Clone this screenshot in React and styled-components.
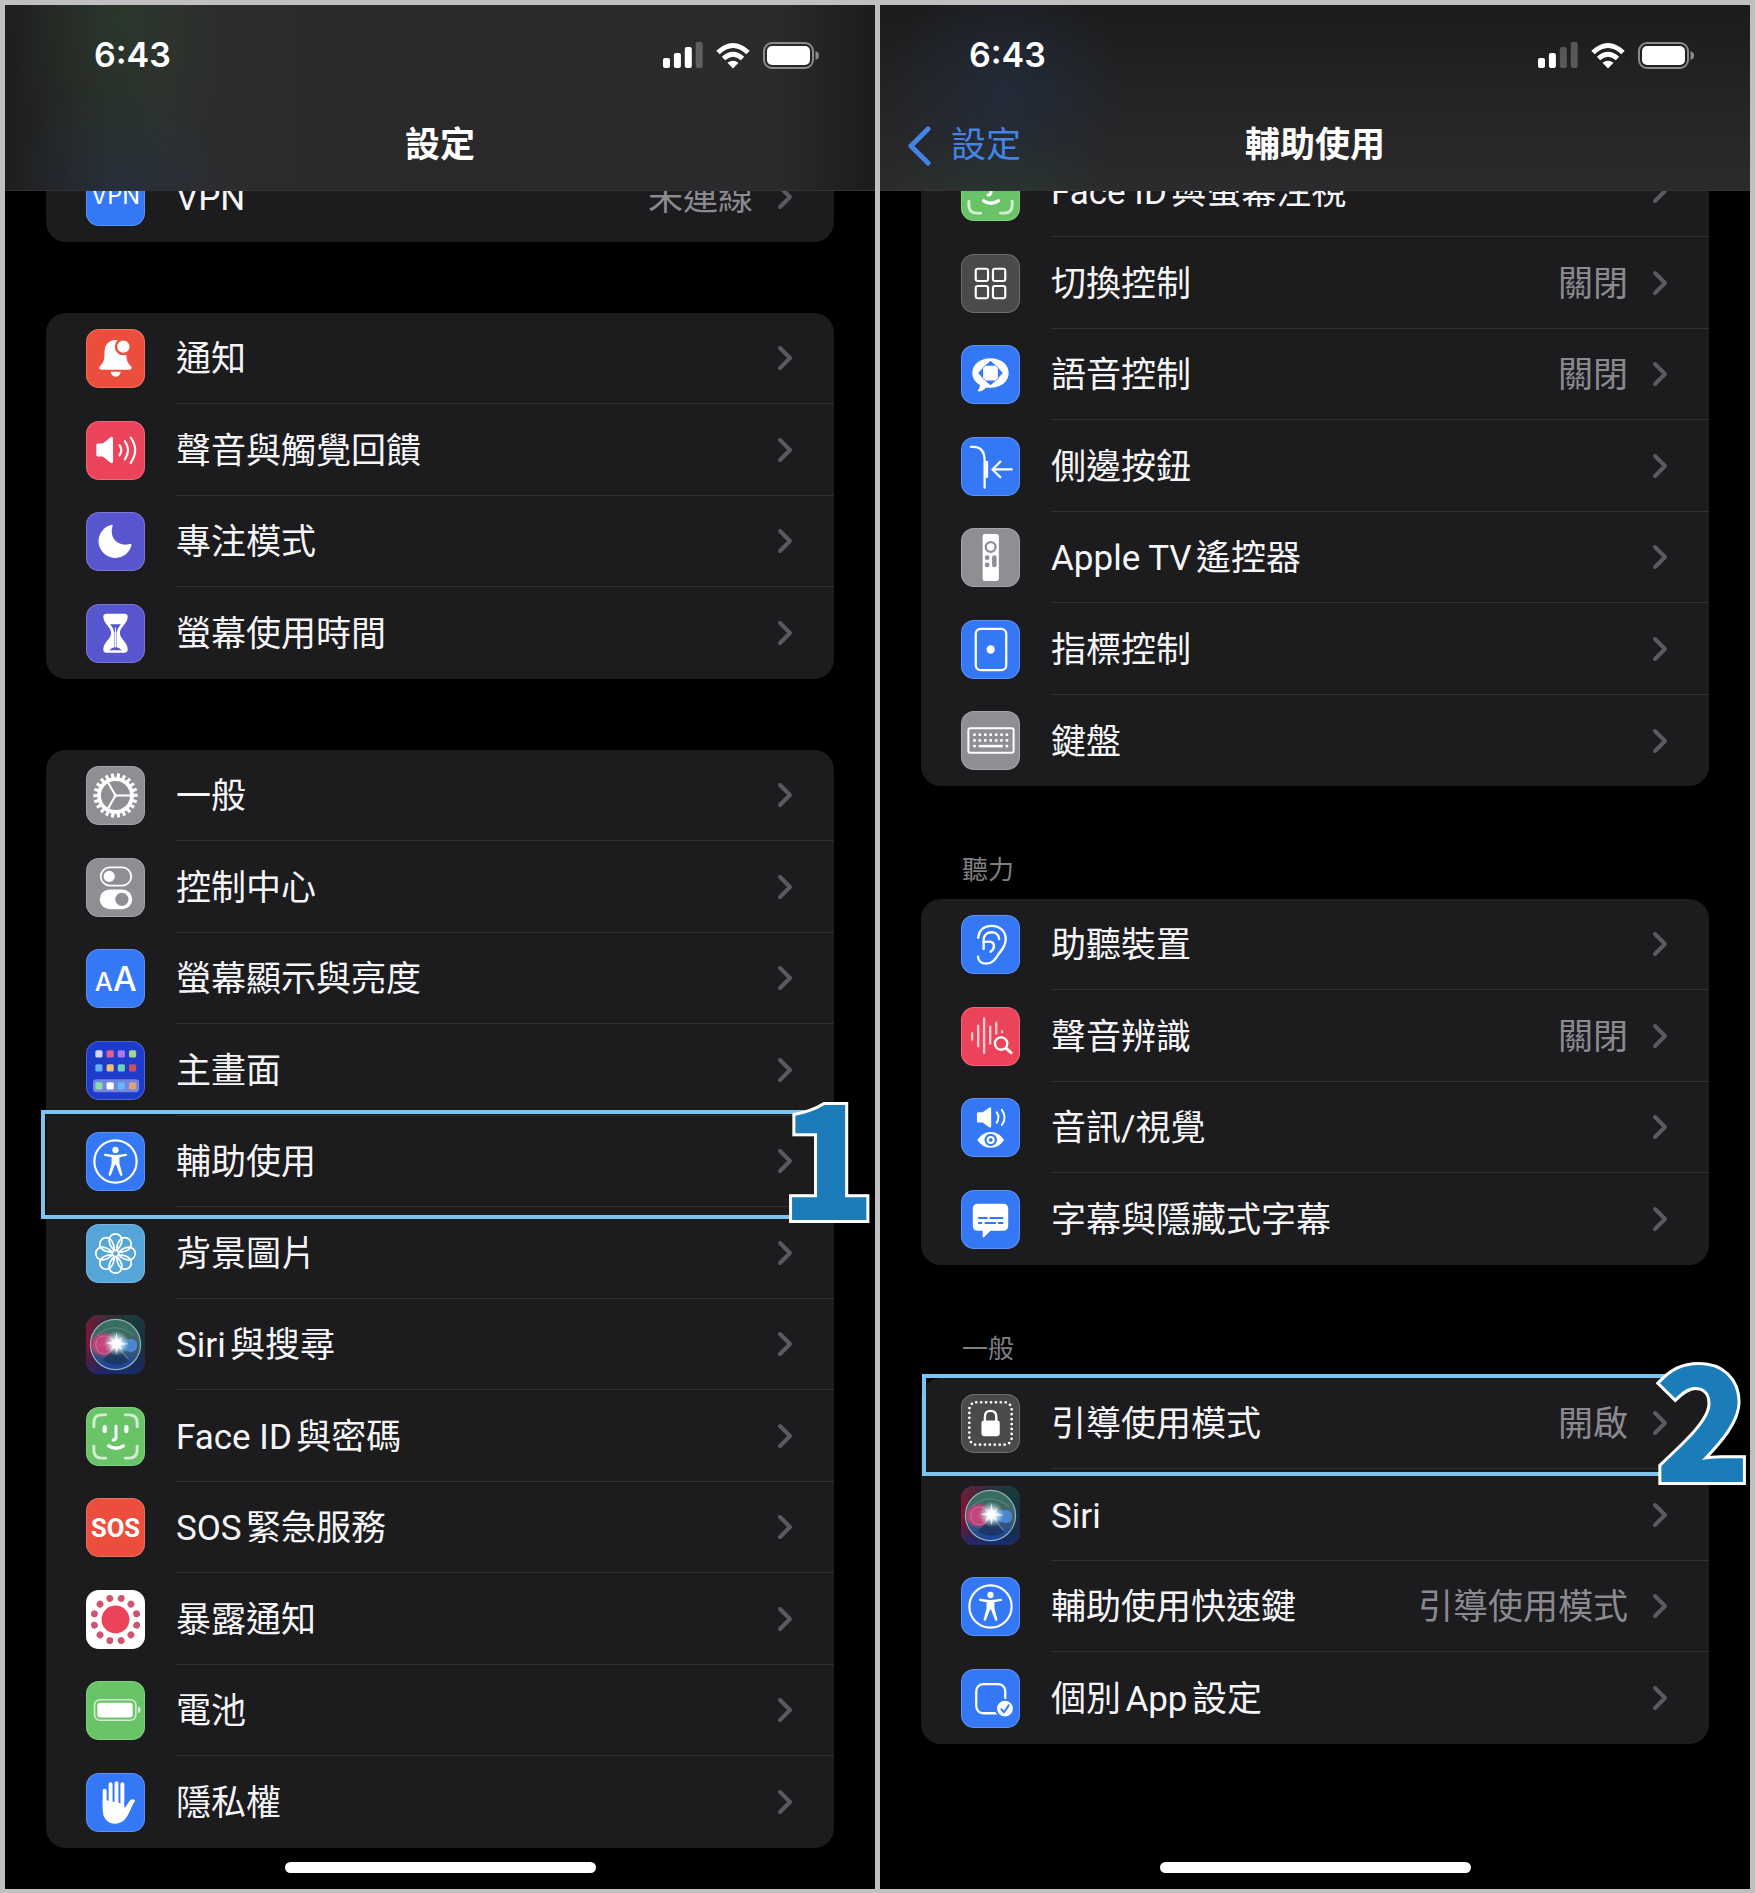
import React from 'react';
import styled, { createGlobalStyle } from 'styled-components';

const GlobalStyle = createGlobalStyle`
  * {
    box-sizing: border-box;
  }
  body {
    margin: 0;
    background-color: #c0c0c0;
    color: #f5f5f7;
    font-family: Roboto, "Noto Sans CJK TC", sans-serif;
    font-size: 35px;
    line-height: 44px;
    text-autospace: normal;
  }
  a {
    color: inherit;
    text-decoration: none;
  }
`

const Page = styled.main`
  min-height: 100vh;
  padding: 5px;
  display: grid;
  grid-template-columns: 1fr 1fr;
  gap: 5px;
`

const Phone = styled.section`
  background-color: #000;
  display: flex;
  flex-direction: column;
  overflow: hidden;
`

const Header = styled.header`
  position: relative;
  z-index: 1;
  padding-top: 28px;
  border-bottom: 1px solid #333335;
  background: ${props => props.$glow};
`

const StatusBar = styled.div`
  display: flex;
  justify-content: space-between;
  align-items: center;
  padding: 0 55px 0 89px;
`

const Time = styled.time`
  color: white;
  font-family: Inter, sans-serif;
  font-size: 34px;
  font-weight: 600;
`

const StatusIcons = styled.svg`
  width: 157px;
  height: 28px;
`

const NavBar = styled.nav`
  display: grid;
  grid-template-columns: 1fr auto 1fr;
  align-items: center;
  padding: 0 27px;
  height: 113px;
  padding-top: 24px;
`

const BackLink = styled.a`
  display: flex;
  align-items: center;
  gap: 20px;
  color: #4583e6;
`

const Title = styled.h1`
  grid-column: 2;
  margin: 0;
  color: white;
  font-size: 35px;
  font-weight: 700;
`

const List = styled.div`
  display: flex;
  flex-direction: column;
  gap: ${props => props.$gap}px;
  margin-top: -${props => props.$scrolled}px;
  padding: 0 41px 14px;
`

const SectionTitle = styled.h2`
  margin: 0;
  padding: 0 41px 11px;
  color: #7f7f84;
  font-size: 26px;
  line-height: 36px;
  font-weight: 400;
`

const Card = styled.ul`
  list-style: none;
  margin: 0;
  padding: 0;
  border-radius: 20px;
  background-color: #1c1c1e;
`

const Item = styled.li`
  position: relative;
  height: 91px;
  &:nth-child(even) {
    height: 92px;
  }
`

const RowLink = styled.a`
  display: flex;
  align-items: center;
  gap: 31px;
  height: 100%;
  padding-left: 40px;
`

const IconTile = styled.svg`
  flex: none;
  width: 59px;
  height: 59px;
  border-radius: 13px;
  background-color: ${props => props.$color};
  box-shadow: inset 0 0 0 1px rgba(255, 255, 255, 0.2);
`

const RowBody = styled.span`
  flex: 1;
  align-self: stretch;
  display: flex;
  align-items: center;
  gap: 24px;
  padding-right: 41px;
  border-bottom: 1px solid #313134;
  ${Item}:last-child & {
    border-bottom: none;
  }
`

const Label = styled.span`
  flex: 1;
  padding-top: 4px;
`

const Value = styled.span`
  padding-top: 4px;
  color: #8a8a90;
`

const Chevron = styled.svg`
  flex: none;
  width: 16px;
  height: 26px;
`

const Highlight = styled.span`
  position: absolute;
  top: ${props => props.$top}px;
  bottom: ${props => props.$bottom}px;
  left: ${props => props.$left}px;
  right: 15px;
  border: 4px solid #7cc5f3;
  border-right: none;
  pointer-events: none;
`

const StepNumber = styled.strong`
  position: absolute;
  z-index: 2;
  right: -42px;
  bottom: -24px;
  color: #1c7cb9;
  font-family: "Noto Sans CJK TC", sans-serif;
  font-size: 158px;
  line-height: 158px;
  font-weight: 900;
  -webkit-text-stroke: 6px white;
  paint-order: stroke fill;
  pointer-events: none;
`

const HomeBar = styled.div`
  width: 311px;
  height: 11px;
  margin: auto auto 16px;
  border-radius: 6px;
  background-color: white;
`

const BLUE = '#3478f6';
const RED = '#eb4e3d';
const PINK = '#eb445a';
const INDIGO = '#5856ce';
const GRAY = '#8e8e93';
const DARK = '#4a4a4c';
const GREEN = '#68c466';

const rowStroke = { fill: 'none', stroke: 'white', strokeLinecap: 'round', strokeLinejoin: 'round' };

const times = (n) => Array.from({ length: n }, (_, i) => i);

const FaceGlyph = () => (
  <g {...rowStroke}>
    <path opacity=".7" strokeWidth="3" d="M8 20v-4q0-8 8-8h4M40 8h4q8 0 8 8v4M52 40v4q0 8-8 8h-4M20 52h-4q-8 0-8-8v-4" />
    <path strokeWidth="4.4" d="M19 20.500v4M41 20.500v4" />
    <path strokeWidth="3" d="M30.500 19.500v11q0 3-3 3" />
    <path strokeWidth="3.400" d="M23 39.500q7.500 5 15 0" />
  </g>
);

const AccessGlyph = () => (
  <g>
    <circle cx="30" cy="30" r="21.500" fill="none" stroke="white" strokeWidth="2.200" />
    <circle cx="30" cy="18.300" r="3.200" fill="white" />
    <path fill="white" d="M19.500 22.200q10.500 2.200 21 0q1.400 0 1.200 1.300q0 .8-1.200 1l-6.500 1.200v6.300l3 11q.2 1.400-.9 1.600t-1.600-1l-4-10.600h-1l-4 10.600q-.5 1.200-1.600 1t-.9-1.600l3-11v-6.300l-6.500-1.200q-1.200-.2-1.200-1q-.2-1.300 1.200-1.300z" />
  </g>
);

const SiriGlyph = () => (
  <g>
    <defs>
      <linearGradient id="siriBack" x1="0" y1=".4" x2="1" y2=".6">
        <stop offset="0" stopColor="#8a1238" />
        <stop offset=".35" stopColor="#40203a" />
        <stop offset=".7" stopColor="#16383a" />
        <stop offset="1" stopColor="#173144" />
      </linearGradient>
      <linearGradient id="siriTop" x1="0" y1="0" x2="0" y2="1">
        <stop offset="0" stopColor="#1f4540" stopOpacity=".4" />
        <stop offset=".5" stopColor="#222" stopOpacity="0" />
        <stop offset="1" stopColor="#152a84" stopOpacity=".8" />
      </linearGradient>
      <linearGradient id="siriOrb" x1="0" y1="0" x2="0" y2="1">
        <stop offset="0" stopColor="#35705c" />
        <stop offset=".5" stopColor="#45626c" />
        <stop offset="1" stopColor="#173fa0" />
      </linearGradient>
      <radialGradient id="siriPink">
        <stop offset="0" stopColor="#c94a86" />
        <stop offset=".75" stopColor="#d13c74" stopOpacity=".85" />
        <stop offset="1" stopColor="#d13c74" stopOpacity="0" />
      </radialGradient>
      <radialGradient id="siriFlare">
        <stop offset="0" stopColor="#fff" />
        <stop offset=".35" stopColor="#f2fbff" stopOpacity=".9" />
        <stop offset="1" stopColor="#9cdff0" stopOpacity="0" />
      </radialGradient>
    </defs>
    <rect width="60" height="60" fill="url(#siriBack)" />
    <rect width="60" height="60" fill="url(#siriTop)" />
    <circle cx="30" cy="30" r="25.500" fill="url(#siriOrb)" stroke="#8fb5b8" strokeWidth="1.200" />
    <ellipse cx="18" cy="30" rx="14" ry="13" fill="url(#siriPink)" />
    <path fill="#4f8fe8" opacity=".8" d="M31 29c10-6 21-7 21 2s-12 9-21-2z" />
    <path fill="#10233c" opacity=".5" d="M30 33l14 14q-14 7-27-1z" />
    <path fill="none" stroke="#c79cc8" strokeWidth="1" opacity=".6" d="M31 30C26 18 10 19 10 30s13 14 21 0l12 15" />
    <path fill="none" stroke="#5cb08c" strokeWidth="1" opacity=".6" d="M11 21q17-16 38 0" />
    <circle cx="31" cy="29" r="13" fill="url(#siriFlare)" />
    <path fill="white" opacity=".75" d="M31 17l1.500 9 5-4-3 5.500 9 2-9 1.500 3 5-5-3-1.500 7-1.500-7-5 3 3-5.500-8-2 8-1.500-3-4 5 3z" />
  </g>
);

const homeDots = [
  ['#d0d6f6', '#dc6190', '#a67bf4', '#a6cf90'],
  ['#60b0f8', '#f0bf76', '#6dd0ba', '#c9506a'],
  ['#87dfa5', '#ffffff', '#64b8f8', '#dca27e'],
];

const ICONS = {
  vpn: {
    color: BLUE,
    glyph: <text x="30" y="38" textAnchor="middle" fill="white" fontFamily="Inter, sans-serif" fontSize="24" fontWeight="400">VPN</text>,
  },
  bell: {
    color: RED,
    glyph: (
      <g fill="white">
        <path d="M30 11.300c7 0 11 5 11 12.500 0 9 1.500 10.500 4.800 14.200 1.200 1.500.7 3.500-1.800 3.500H15.800c-2.500 0-3-2-1.800-3.500 3.300-3.700 4.800-5.200 4.800-14.200 0-7.500 4.200-12.500 11.200-12.500z" />
        <path d="M25 43.500h10.400q-1.200 5-5.200 5t-5.200-5z" />
        <circle cx="38" cy="18" r="7.500" stroke={RED} strokeWidth="2.500" />
      </g>
    ),
  },
  speaker: {
    color: PINK,
    glyph: (
      <g>
        <path fill="white" d="M12 23h5l8-6.500q2.500-1.500 2.500 1.500v23q0 3-2.500 1.500L17 36h-5q-1.500 0-1.500-1.500v-10q0-1.500 1.500-1.500z" />
        <path {...rowStroke} strokeWidth="2.200" d="M34 24.500q4 5 0 10.500M39.500 20.500q6.500 9 0 18.500M45.500 17q9 12.500 0 25.500" />
      </g>
    ),
  },
  moon: {
    color: INDIGO,
    glyph: <path fill="white" d="M25.500 13.200c1.200-.5 1.900 0 1.500 1.200-3.700 11.500 5 21.500 17.500 18.200 1.400-.3 2.200.5 1.600 1.700A17 17 0 1 1 25.500 13.200z" />,
  },
  hourglass: {
    color: INDIGO,
    glyph: (
      <g>
        <path fill="white" d="M21 10h18q4 0 3.300 4c-1 7-7.800 9.500-7.800 15.500s6.800 8.500 7.800 15.500q.7 4.500-3.300 4.500H21q-4 0-3.300-4.500c1-7 7.800-9.500 7.800-15.500S18.700 21 17.700 14q-.7-4 3.300-4z" />
        <path fill={INDIGO} d="M24.500 20.500h11q-3.700 4-4.500 8.500v15q3 .5 5.500 3h-13q2.500-2.500 5.500-3v-15q-.8-4.500-4.500-8.500z" />
        <path stroke="white" strokeWidth="1" d="M30 24v20" />
      </g>
    ),
  },
  gear: {
    color: GRAY,
    glyph: (
      <g {...rowStroke}>
        <circle cx="30" cy="30" r="16.700" strokeWidth="3.800" />
        {times(22).map(i => (
          <path key={i} strokeWidth="3.200" strokeLinecap="butt" d="M30 13V7.500" transform={`rotate(${i * 360 / 22 + 8} 30 30)`} />
        ))}
        <path strokeWidth="2.200" d="M30 30h16M30 30l-8-14M30 30l-8 14" />
        <circle cx="30" cy="30" r="1.500" fill="white" />
      </g>
    ),
  },
  toggles: {
    color: GRAY,
    glyph: (
      <g>
        <rect x="15" y="9.500" width="31" height="18.500" rx="9.250" fill="none" stroke="white" strokeWidth="1.800" />
        <circle cx="23.600" cy="18.700" r="5.700" fill="white" />
        <rect x="14" y="32" width="33" height="20" rx="10" fill="white" />
        <circle cx="36.500" cy="42" r="6.700" fill={GRAY} />
      </g>
    ),
  },
  letters: {
    color: BLUE,
    glyph: (
      <g fill="white" fontFamily="Inter, sans-serif" fontWeight="500">
        <text x="9" y="42.500" fontSize="26">A</text>
        <text x="27.500" y="42.500" fontSize="34">A</text>
      </g>
    ),
  },
  home: {
    color: '#1d3ccb',
    glyph: (
      <g>
        <rect x="7" y="39" width="47" height="13" rx="3.500" fill="white" opacity=".38" />
        {homeDots.map((line, r) => line.map((fill, c) => (
          <rect key={`${r}-${c}`} x={9.5 + c * 11.4} y={[9.5, 23.700, 42][r]} width="7.300" height="7.300" rx="1.600" fill={fill} />
        )))}
      </g>
    ),
  },
  access: { color: BLUE, glyph: <AccessGlyph /> },
  flower: {
    color: '#55a5d8',
    glyph: (
      <g {...rowStroke} strokeWidth="1.800">
        {times(8).map(i => (
          <path key={i} d="M30 28C26.500 25 23.500 20.500 23.500 16.500a6.500 6.500 0 0 1 13 0C36.500 20.500 33.500 25 30 28z" transform={`rotate(${i * 45} 30 30)`} />
        ))}
        <circle cx="30" cy="30" r="3.300" fill="#55a5d8" />
      </g>
    ),
  },
  siri: { color: '#1b2a38', glyph: <SiriGlyph /> },
  face: { color: GREEN, glyph: <FaceGlyph /> },
  sos: {
    color: RED,
    glyph: <text x="30" y="40" textAnchor="middle" fill="white" fontFamily="Roboto, sans-serif" fontSize="26" fontWeight="700">SOS</text>,
  },
  exposure: {
    color: 'white',
    glyph: (
      <g fill="#eb445a">
        <circle cx="30" cy="30" r="14.200" />
        {times(12).map(i => (
          <circle key={i} cx="30" cy="7.800" r="3.500" fill="#cf5470" transform={`rotate(${15 + i * 30} 30 30)`} />
        ))}
      </g>
    ),
  },
  battery: {
    color: GREEN,
    glyph: (
      <g>
        <rect x="8.700" y="19" width="42" height="21" rx="5.500" fill="none" stroke="white" strokeWidth="1.600" opacity=".7" />
        <rect x="11.500" y="22" width="36" height="15" rx="2.800" fill="white" />
        <path fill="white" opacity=".7" d="M52.700 26q3 1 3 3.500t-3 3.500z" />
      </g>
    ),
  },
  hand: {
    color: BLUE,
    glyph: (
      <g>
        <path {...rowStroke} strokeWidth="4" d="M19 18v16M25 11.500V30M31 10.500V30M37 11.500V30" />
        <path fill="white" d="M17 27l22 4.500v4c1.500-1 3-3.500 4.500-6 1.800-2.800 4.500-3.300 6-2q.6.800-.3 2C46 34 44.500 41 40.500 46c-3 3.800-6.500 5.500-10.500 5.500-8.500 0-13-6-13-14z" />
      </g>
    ),
  },
  switches: {
    color: DARK,
    glyph: (
      <g {...rowStroke} strokeWidth="2.200">
        <rect x="15" y="15" width="12.500" height="12.500" rx="2" />
        <rect x="32.500" y="15" width="12.500" height="12.500" rx="2" />
        <rect x="15" y="32.500" width="12.500" height="12.500" rx="2" />
        <rect x="32.500" y="32.500" width="12.500" height="12.500" rx="2" />
      </g>
    ),
  },
  voice: {
    color: BLUE,
    glyph: (
      <g>
        <path fill="white" d="M30 13.500c11 0 18.500 6.500 18.500 15S41 43.500 30 43.500c-1.500 0-3-.1-4.300-.4-2 2.300-4.700 3.900-7.700 4.100-.9 0-1.200-.8-.6-1.500 1.300-1.600 1.900-3.300 1.900-5C14.500 37.900 11.500 33.700 11.500 28.500c0-8.500 7.500-15 18.500-15z" />
        <path fill={BLUE} d="M30 16l5.500 5h-11zM30 41l5.500-5h-11zM17.500 28.500l5-5.500v11zM42.500 28.500l-5-5.500v11z" />
        <path fill="none" stroke={BLUE} strokeWidth="1" d="M22.500 23l2-2M35.500 21l2 2M37.500 34l-2 2M24.500 36l-2-2" />
      </g>
    ),
  },
  side: {
    color: BLUE,
    glyph: (
      <g {...rowStroke} strokeWidth="2.300">
        <path d="M10 10h2.500Q24 10 24 24v27.500" />
        <path strokeWidth="2.800" strokeLinecap="butt" d="M26.200 24.500v17" />
        <path d="M51.500 33H32M40 25l-8 8 8 8" />
      </g>
    ),
  },
  remote: {
    color: GRAY,
    glyph: (
      <g fill={GRAY}>
        <rect x="22" y="6" width="16.500" height="48" rx="2.500" fill="white" />
        <circle cx="30.200" cy="19.300" r="5" fill="none" stroke={GRAY} strokeWidth="2.400" />
        <circle cx="26.600" cy="30.200" r="2.400" />
        <circle cx="26.600" cy="37.500" r="2.400" />
        <rect x="31.600" y="27.800" width="4.600" height="12" rx="2.300" />
      </g>
    ),
  },
  pointer: {
    color: BLUE,
    glyph: (
      <g>
        <rect x="15" y="9" width="31" height="42" rx="5" fill="none" stroke="white" strokeWidth="2.300" />
        <circle cx="30.200" cy="30" r="4.200" fill="white" />
      </g>
    ),
  },
  keyboard: {
    color: GRAY,
    glyph: (
      <g fill="white">
        <rect x="7.500" y="17.500" width="46" height="25" rx="1.800" fill="none" stroke="white" strokeWidth="2" />
        {times(7).map(i => <rect key={i} x={12.4 + i * 5.500} y="22.800" width="2.600" height="2.600" />)}
        {times(7).map(i => <rect key={i} x={12.4 + i * 5.500} y="28.600" width="2.600" height="2.600" />)}
        <rect x="12.400" y="34.400" width="2.600" height="2.600" />
        <rect x="17.900" y="34.400" width="24.600" height="2.600" />
        <rect x="45.400" y="34.400" width="2.600" height="2.600" />
      </g>
    ),
  },
  ear: {
    color: BLUE,
    glyph: (
      <g {...rowStroke} strokeWidth="2.400">
        <path d="M17.500 23C18.500 15 24 11 31 11c8.500 0 14.500 5.500 14.500 13.500 0 6-2.500 9.500-6 13.500C36 42 34 49.500 25.500 49.500c-4.500 0-8-2.500-8.200-7" />
        <path d="M23 34.500V26c0-6 4-8.500 8-8.500 4.500 0 7.500 3 7.800 7" />
        <path d="M23 27.500c6-1 10.500-.5 10.500 4 0 2-1.500 4.500-3.500 5.800" />
      </g>
    ),
  },
  sound: {
    color: PINK,
    glyph: (
      <g {...rowStroke}>
        <path opacity=".7" strokeWidth="2.400" d="M11.300 26.500v6.500M17.500 19v21M23.500 11.500v35M29.700 20v17M35.800 16v11M41.800 24.500v1" />
        <circle cx="40.800" cy="37.200" r="6.300" strokeWidth="2.400" />
        <path strokeWidth="3" d="M46 42l5 4.500" />
      </g>
    ),
  },
  audioVisual: {
    color: BLUE,
    glyph: (
      <g>
        <path fill="white" d="M17.500 14.500H22l6.500-4.700q2.200-1.200 2.200 1.200v17.500q0 2.400-2.200 1.200L22 25h-4.500q-1.300 0-1.300-1.300v-7.900q0-1.300 1.300-1.300z" />
        <path {...rowStroke} strokeWidth="2" d="M36.300 14.500q3.600 5.200 0 10.500M41.500 12q5.600 7.700 0 15.500" />
        <path fill="white" d="M16.500 42.700q5.500-8 13.700-8t13.700 8q-5.500 8-13.700 8t-13.700-8z" />
        <circle cx="30.200" cy="42.700" r="5.200" fill="white" stroke={BLUE} strokeWidth="2.200" />
        <circle cx="30.200" cy="42.700" r="1.900" fill={BLUE} />
      </g>
    ),
  },
  subtitles: {
    color: BLUE,
    glyph: (
      <g>
        <path fill="white" d="M17.500 14h25q5.500 0 5.500 5.500v16.500q0 5.500-5.500 5.500H30l-6.500 6.300q-1.500 1.200-1.500-.8v-5.500h-4.500q-5.500 0-5.500-5.500V19.500q0-5.500 5.500-5.500z" />
        <path stroke={BLUE} strokeWidth="2" d="M17.500 28.500h9.500M29 28.500h14M17.500 33.500h4M24 33.500h11.500M37.500 33.500H43" />
      </g>
    ),
  },
  guided: {
    color: DARK,
    glyph: (
      <g>
        <rect x="8.500" y="8.500" width="43" height="43" rx="7" fill="none" stroke="white" strokeWidth="2.800" strokeLinecap="round" strokeDasharray="0 5" />
        <rect x="20.800" y="27" width="18.600" height="16" rx="2.500" fill="white" />
        <path fill="none" stroke="white" strokeWidth="2.400" d="M24.300 28v-4.500q0-6.300 5.800-6.300t5.800 6.300V28" />
      </g>
    ),
  },
  perApp: {
    color: BLUE,
    glyph: (
      <g {...rowStroke}>
        <rect x="15.500" y="15.500" width="29.500" height="29.500" rx="7" strokeWidth="2.300" />
        <circle cx="44.700" cy="40.300" r="9" fill="white" stroke={BLUE} strokeWidth="2" />
        <path stroke={BLUE} strokeWidth="2" d="M41 41l2.800 3 4.700-7" />
      </g>
    ),
  },
};

const settingsCards = [
  { rows: [{ icon: 'vpn', label: 'VPN', value: '未連線' }] },
  {
    rows: [
      { icon: 'bell', label: '通知' },
      { icon: 'speaker', label: '聲音與觸覺回饋' },
      { icon: 'moon', label: '專注模式' },
      { icon: 'hourglass', label: '螢幕使用時間' },
    ],
  },
  {
    rows: [
      { icon: 'gear', label: '一般' },
      { icon: 'toggles', label: '控制中心' },
      { icon: 'letters', label: '螢幕顯示與亮度' },
      { icon: 'home', label: '主畫面' },
      { icon: 'access', label: '輔助使用', step: { number: 1, top: -6, bottom: -12, left: -5 } },
      { icon: 'flower', label: '背景圖片' },
      { icon: 'siri', label: 'Siri與搜尋' },
      { icon: 'face', label: 'Face ID與密碼' },
      { icon: 'sos', label: 'SOS緊急服務' },
      { icon: 'exposure', label: '暴露通知' },
      { icon: 'battery', label: '電池' },
      { icon: 'hand', label: '隱私權' },
    ],
  },
];

const accessCards = [
  {
    rows: [
      { icon: 'face', label: 'Face ID與螢幕注視' },
      { icon: 'switches', label: '切換控制', value: '關閉' },
      { icon: 'voice', label: '語音控制', value: '關閉' },
      { icon: 'side', label: '側邊按鈕' },
      { icon: 'remote', label: 'Apple TV遙控器' },
      { icon: 'pointer', label: '指標控制' },
      { icon: 'keyboard', label: '鍵盤' },
    ],
  },
  {
    title: '聽力',
    rows: [
      { icon: 'ear', label: '助聽裝置' },
      { icon: 'sound', label: '聲音辨識', value: '關閉' },
      { icon: 'audioVisual', label: '音訊/視覺' },
      { icon: 'subtitles', label: '字幕與隱藏式字幕' },
    ],
  },
  {
    title: '一般',
    rows: [
      { icon: 'guided', label: '引導使用模式', value: '開啟', step: { number: 2, top: -4, bottom: -7, left: 1 } },
      { icon: 'siri', label: 'Siri' },
      { icon: 'access', label: '輔助使用快速鍵', value: '引導使用模式' },
      { icon: 'perApp', label: '個別App設定' },
    ],
  },
];

const settingsGlow = `
  radial-gradient(ellipse 110px 180px at 115px 15px, rgba(42, 64, 44, 0.6), transparent),
  radial-gradient(ellipse 110px 100px at 115px 175px, rgba(36, 50, 70, 0.6), transparent),
  linear-gradient(90deg, #1e1e1e, #2d2d2d 18%, #29292b 50%, #2b2b2d 88%, #1c1c1c)`;

const accessGlow = `
  radial-gradient(ellipse 120px 130px at 125px 85px, rgba(34, 48, 70, 0.6), transparent),
  radial-gradient(ellipse 110px 60px at 120px 185px, rgba(40, 60, 42, 0.6), transparent),
  linear-gradient(180deg, #1b1b1b, #232324 45%, #2b2b2d)`;

const Row = ({ icon, label, value, step }) => (
  <Item>
    <RowLink href="#">
      <IconTile viewBox="0 0 60 60" aria-hidden="true" $color={ICONS[icon].color}>
        {ICONS[icon].glyph}
      </IconTile>
      <RowBody>
        <Label>{label}</Label>
        {value && <Value>{value}</Value>}
        <Chevron viewBox="0 0 16 26" aria-hidden="true">
          <path d="M3 3l10 10L3 23" fill="none" stroke="#5b5b5f" strokeWidth="4" strokeLinecap="round" strokeLinejoin="round" />
        </Chevron>
      </RowBody>
    </RowLink>
    {step && (
      <>
        <Highlight $top={step.top} $bottom={step.bottom} $left={step.left} />
        <StepNumber>{step.number}</StepNumber>
      </>
    )}
  </Item>
);

const Status = ({ bars }) => (
  <StatusBar>
    <Time>6:43</Time>
    <StatusIcons viewBox="0 0 157 28" role="img" aria-label="status">
      {[10, 15, 21, 26].map((h, i) => (
        <rect key={h} x={i * 10.900} y={27 - h} width="7" height={h} rx="2" fill="white" opacity={i < bars ? 1 : 0.25} />
      ))}
      <g fill="none" stroke="white" strokeWidth="5">
        <path d="M55 11.500q15-14 30 0" />
        <path d="M60.500 17.500q9.500-8.500 19 0" />
      </g>
      <path fill="white" d="M64.500 21.800q5.500-4.200 11 0L70 27.500z" />
      <rect x="101" y="2" width="49" height="25" rx="8" fill="none" stroke="#8a8a8a" strokeWidth="2" />
      <rect x="104" y="5" width="43" height="19" rx="5" fill="white" />
      <path fill="#8a8a8a" d="M152.500 10q3.500 1 3.500 4.500t-3.500 4.500z" />
    </StatusIcons>
  </StatusBar>
);

const Cards = ({ cards }) => cards.map((card, i) => (
  <section key={i}>
    {card.title && <SectionTitle>{card.title}</SectionTitle>}
    <Card>
      {card.rows.map(row => <Row key={row.label} {...row} />)}
    </Card>
  </section>
));

const App = () => {
  return (
    <>
      <GlobalStyle />
      <Page>
        <Phone>
          <Header $glow={settingsGlow}>
            <Status bars={3} />
            <NavBar>
              <Title>設定</Title>
            </NavBar>
          </Header>
          <List $gap={71} $scrolled={40}>
            <Cards cards={settingsCards} />
          </List>
          <HomeBar />
        </Phone>

        <Phone>
          <Header $glow={accessGlow}>
            <Status bars={2} />
            <NavBar>
              <BackLink href="#">
                <svg width="24" height="40" viewBox="0 0 24 40" aria-hidden="true">
                  <path d="M21 3L4 20l17 17" fill="none" stroke="currentColor" strokeWidth="5" strokeLinecap="round" strokeLinejoin="round" />
                </svg>
                設定
              </BackLink>
              <Title>輔助使用</Title>
            </NavBar>
          </Header>
          <List $gap={66} $scrolled={45}>
            <Cards cards={accessCards} />
          </List>
          <HomeBar />
        </Phone>
      </Page>
    </>
  );
};

export default App;
